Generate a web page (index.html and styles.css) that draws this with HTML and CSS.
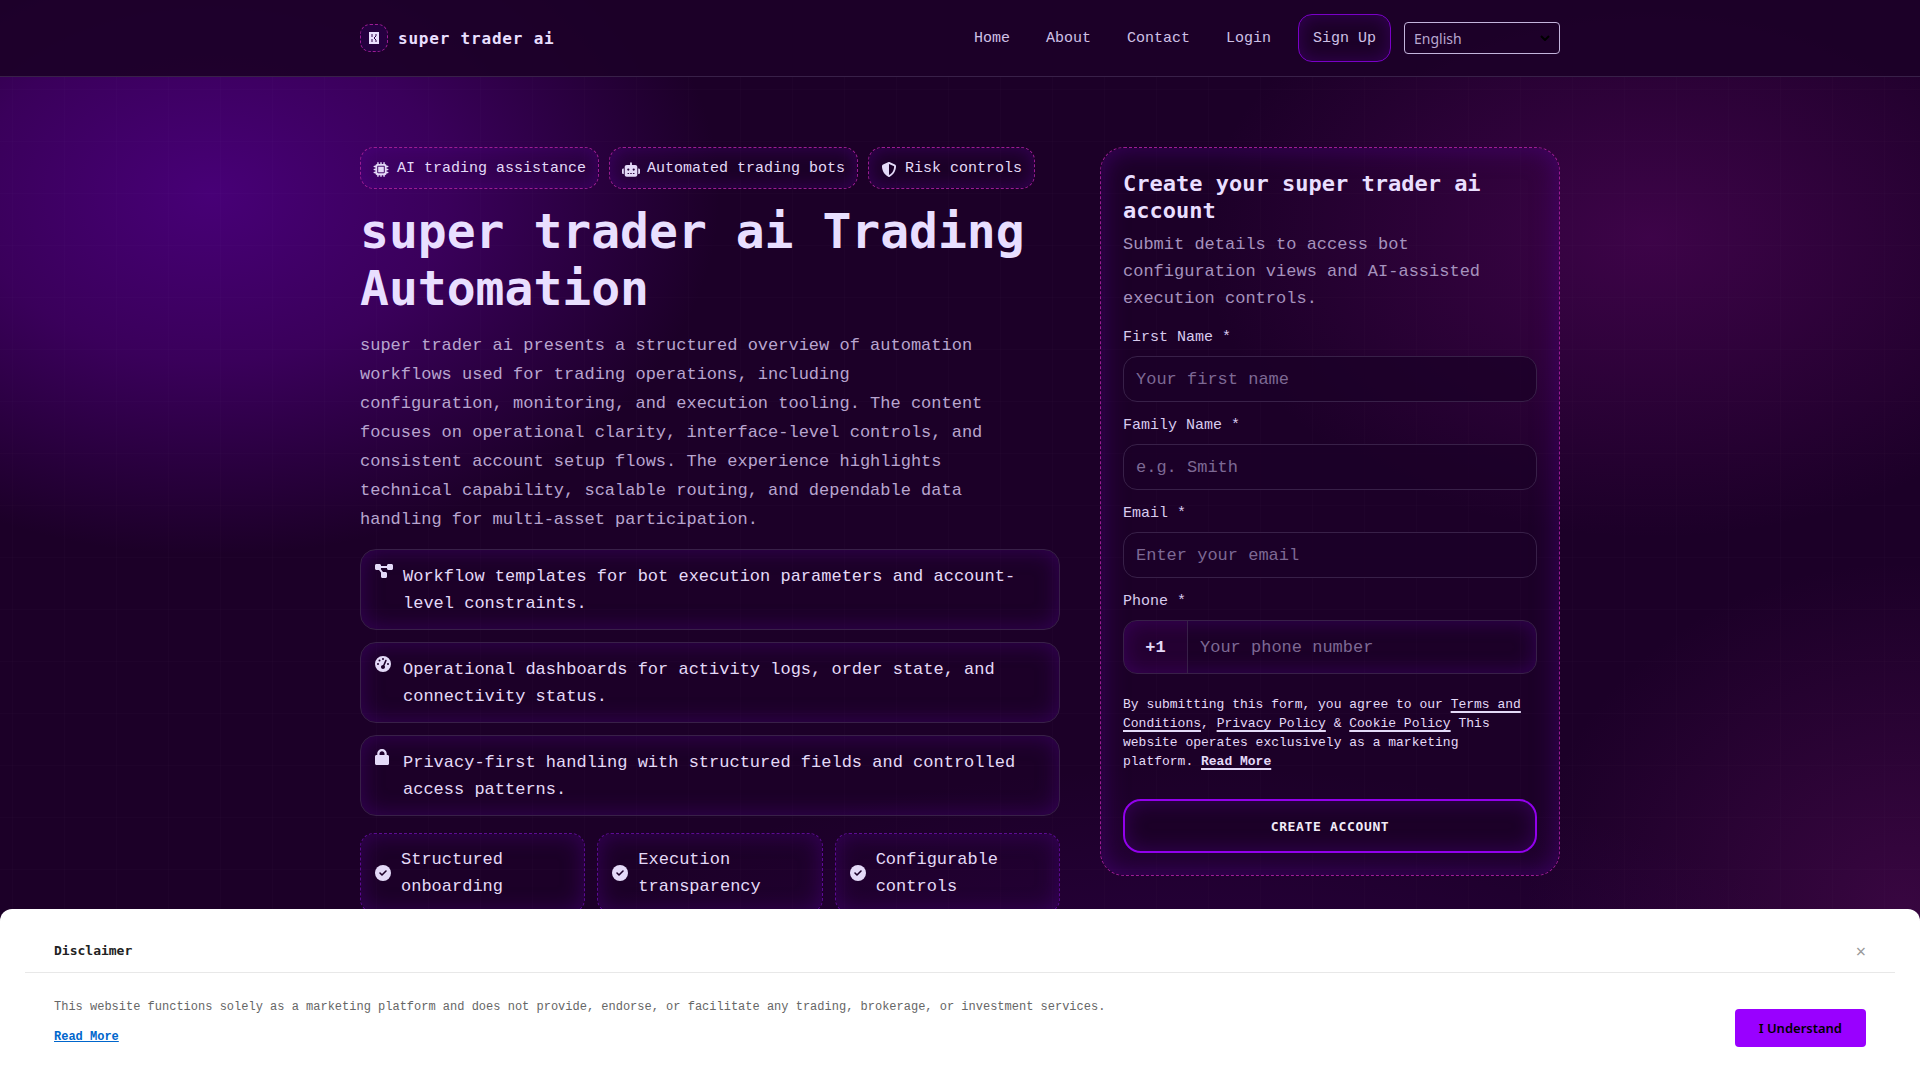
FILE: index.html
```
<!DOCTYPE html>
<html lang="en">
<head>
  <meta charset="UTF-8">
  <meta name="viewport" content="width=device-width, initial-scale=1.0">
  <title>super trader ai</title>
  <link rel="stylesheet" href="styles.css">
</head>
<body>
  <header class="site-header">
    <div class="container header-inner">
      <a class="brand" href="#">
        <span class="brand-mark">
          <svg width="10" height="12" viewBox="0 0 10 12" aria-hidden="true"><path fill="currentColor" d="M0 0h10v12H0z"/><path fill="none" stroke="#2a0045" d="M3 2v3M3 7v3M7 2v2L5 6l2 2v2"/></svg>
        </span>
        <span class="brand-name">super trader ai</span>
      </a>
      <div class="header-right">
        <nav class="nav">
          <a href="#">Home</a>
          <a href="#">About</a>
          <a href="#">Contact</a>
          <a href="#">Login</a>
        </nav>
        <a class="signup" href="#">Sign Up</a>
        <div class="lang">
          <select class="lang-select" aria-label="Language">
            <option>English</option>
          </select>
          <svg class="lang-arrow" width="10" height="6" viewBox="0 0 10 6" aria-hidden="true"><path d="M1 1l4 4 4-4" fill="none" stroke="#000" stroke-width="2"/></svg>
        </div>
      </div>
    </div>
  </header>

  <main class="hero">
    <div class="container hero-grid">
      <section class="hero-copy">
        <div class="chips">
          <span class="chip">
            <svg width="16" height="15" viewBox="0 0 512 512" aria-hidden="true"><path fill="currentColor" fill-rule="evenodd" d="M176 24c0-13-11-24-24-24s-24 11-24 24v40c-35 0-64 29-64 64H24c-13 0-24 11-24 24s11 24 24 24h40v56H24c-13 0-24 11-24 24s11 24 24 24h40v56H24c-13 0-24 11-24 24s11 24 24 24h40c0 35 29 64 64 64v40c0 13 11 24 24 24s24-11 24-24v-40h56v40c0 13 11 24 24 24s24-11 24-24v-40h56v40c0 13 11 24 24 24s24-11 24-24v-40c35 0 64-29 64-64h40c13 0 24-11 24-24s-11-24-24-24h-40v-56h40c13 0 24-11 24-24s-11-24-24-24h-40v-56h40c13 0 24-11 24-24s-11-24-24-24h-40c0-35-29-64-64-64V24c0-13-11-24-24-24s-24 11-24 24v40h-56V24c0-13-11-24-24-24s-24 11-24 24v40h-56V24zM160 128h192c18 0 32 14 32 32v192c0 18-14 32-32 32H160c-18 0-32-14-32-32V160c0-18 14-32 32-32z"/><path fill="currentColor" d="M160 160h192v192H160z"/></svg>
            AI trading assistance
          </span>
          <span class="chip chip-bot">
            <svg width="18" height="15" viewBox="0 0 640 512" aria-hidden="true"><path fill="currentColor" fill-rule="evenodd" d="M320 0c18 0 32 14 32 32v64h120c40 0 72 32 72 72v272c0 40-32 72-72 72H168c-40 0-72-32-72-72V168c0-40 32-72 72-72h120V32c0-18 14-32 32-32zM208 384c-9 0-16 7-16 16s7 16 16 16h32c9 0 16-7 16-16s-7-16-16-16h-32zm96 0c-9 0-16 7-16 16s7 16 16 16h32c9 0 16-7 16-16s-7-16-16-16h-32zm96 0c-9 0-16 7-16 16s7 16 16 16h32c9 0 16-7 16-16s-7-16-16-16h-32zM264 256a40 40 0 1 0-80 0 40 40 0 1 0 80 0zm152 40a40 40 0 1 0 0-80 40 40 0 1 0 0 80zM48 224h16v192H48c-26 0-48-22-48-48v-96c0-26 22-48 48-48zm544 0c26 0 48 22 48 48v96c0 26-22 48-48 48h-16V224h16z"/></svg>
            Automated trading bots
          </span>
          <span class="chip">
            <svg width="16" height="15" viewBox="0 0 512 512" aria-hidden="true"><path fill="currentColor" fill-rule="evenodd" d="M256 0c5 0 9 1 13 3l188 80c22 9 39 31 39 57 0 100-41 281-213 363-17 8-37 8-54 0C57 421 16 240 16 140c0-26 17-48 39-57L243 3c4-2 8-3 13-3zm0 67v378c138-67 175-215 176-303L256 67z"/></svg>
            Risk controls
          </span>
        </div>
        <h1 class="title">super trader ai Trading Automation</h1>
        <p class="lede">super trader ai presents a structured overview of automation workflows used for trading operations, including configuration, monitoring, and execution tooling. The content focuses on operational clarity, interface-level controls, and consistent account setup flows. The experience highlights technical capability, scalable routing, and dependable data handling for multi-asset participation.</p>
        <ul class="features">
          <li class="feature">
            <svg width="18" height="16" viewBox="0 0 576 512" aria-hidden="true"><path fill="currentColor" d="M0 80c0-26 22-48 48-48h96c26 0 48 22 48 48v16h192V80c0-26 22-48 48-48h96c26 0 48 22 48 48v96c0 26-22 48-48 48h-96c-26 0-48-22-48-48v-16H192v16c0 7-2 14-5 21l69 91h80c26 0 48 22 48 48v96c0 26-22 48-48 48h-96c-26 0-48-22-48-48v-96c0-7 2-14 5-21l-69-91H48c-26 0-48-22-48-48V80z"/></svg>
            <span>Workflow templates for bot execution parameters and account-level constraints.</span>
          </li>
          <li class="feature">
            <svg width="16" height="16" viewBox="0 0 512 512" aria-hidden="true"><path fill="currentColor" fill-rule="evenodd" d="M0 256a256 256 0 1 1 512 0 256 256 0 1 1-512 0zM288 96a32 32 0 1 0-64 0 32 32 0 1 0 64 0zM256 416c35 0 64-29 64-64 0-16-6-31-16-42l69-160c5-12 0-26-12-31s-26 0-32 12l-69 160c-37-1-68 27-68 61 0 35 29 64 64 64zM176 144a32 32 0 1 0-64 0 32 32 0 1 0 64 0zM96 288a32 32 0 1 0 0-64 32 32 0 1 0 0 64zm352-32a32 32 0 1 0-64 0 32 32 0 1 0 64 0z"/></svg>
            <span>Operational dashboards for activity logs, order state, and connectivity status.</span>
          </li>
          <li class="feature">
            <svg width="14" height="16" viewBox="0 0 448 512" aria-hidden="true"><path fill="currentColor" d="M400 192h-24v-40C376 68 308 0 224 0S72 68 72 152v40H48c-27 0-48 22-48 48v224c0 27 21 48 48 48h352c27 0 48-21 48-48V240c0-26-21-48-48-48zm-96 0H144v-40c0-44 36-80 80-80s80 36 80 80v40z"/></svg>
            <span>Privacy-first handling with structured fields and controlled access patterns.</span>
          </li>
        </ul>
        <div class="stats">
          <div class="stat">
            <svg width="16" height="16" viewBox="0 0 16 16" aria-hidden="true"><circle cx="8" cy="8" r="8" fill="currentColor"/><path d="M5 8l2 2 4-4" fill="none" stroke="#1c0028" stroke-width="1.6" stroke-linecap="round" stroke-linejoin="round"/></svg>
            <span>Structured onboarding</span>
          </div>
          <div class="stat">
            <svg width="16" height="16" viewBox="0 0 16 16" aria-hidden="true"><circle cx="8" cy="8" r="8" fill="currentColor"/><path d="M5 8l2 2 4-4" fill="none" stroke="#1c0028" stroke-width="1.6" stroke-linecap="round" stroke-linejoin="round"/></svg>
            <span>Execution transparency</span>
          </div>
          <div class="stat">
            <svg width="16" height="16" viewBox="0 0 16 16" aria-hidden="true"><circle cx="8" cy="8" r="8" fill="currentColor"/><path d="M5 8l2 2 4-4" fill="none" stroke="#1c0028" stroke-width="1.6" stroke-linecap="round" stroke-linejoin="round"/></svg>
            <span>Configurable controls</span>
          </div>
        </div>
      </section>

      <aside class="card">
        <h2 class="card-title">Create your super trader ai account</h2>
        <p class="card-text">Submit details to access bot configuration views and AI-assisted execution controls.</p>
        <form class="form">
          <div class="field">
            <label for="firstName">First Name *</label>
            <input class="input" id="firstName" type="text" placeholder="Your first name">
          </div>
          <div class="field">
            <label for="familyName">Family Name *</label>
            <input class="input" id="familyName" type="text" placeholder="e.g. Smith">
          </div>
          <div class="field">
            <label for="email">Email *</label>
            <input class="input" id="email" type="email" placeholder="Enter your email">
          </div>
          <div class="field">
            <label for="phone">Phone *</label>
            <div class="phone">
              <span class="phone-code">+1</span>
              <input class="phone-input" id="phone" type="tel" placeholder="Your phone number">
            </div>
          </div>
          <p class="terms">By submitting this form, you agree to our <a href="#">Terms and Conditions</a>, <a href="#">Privacy Policy</a> &amp; <a href="#">Cookie Policy</a> This website operates exclusively as a marketing platform. <a class="more" href="#">Read More</a></p>
          <button class="submit" type="button">CREATE ACCOUNT</button>
        </form>
      </aside>
    </div>
  </main>

  <div class="disclaimer">
    <div class="disclaimer-head">
      <h3 class="disclaimer-title">Disclaimer</h3>
      <button class="disclaimer-close" type="button" aria-label="Close">×</button>
    </div>
    <div class="disclaimer-body">
      <div class="disclaimer-text">
        <p>This website functions solely as a marketing platform and does not provide, endorse, or facilitate any trading, brokerage, or investment services.</p>
        <a href="#">Read More</a>
      </div>
      <button class="understand" type="button">I Understand</button>
    </div>
  </div>
</body>
</html>
```
FILE: styles.css
```
* {
  box-sizing: border-box;
}
body {
  margin: 0;
  height: 100vh;
  overflow: hidden;
  color: #e4daf8;
  background-color: #1c0028;
  background-image:
    radial-gradient(620px 440px at 11% 18%, rgba(82, 0, 138, 0.8), rgba(74, 0, 118, 0.65) 38%, transparent 82%),
    radial-gradient(600px 400px at 86% 22%, rgba(120, 10, 130, 0.36), transparent 75%),
    radial-gradient(500px 460px at 99% 84%, rgba(120, 20, 120, 0.3), transparent 75%),
    radial-gradient(900px 360px at 62% 96%, rgba(85, 0, 140, 0.24), transparent 75%);
  font: 17px/27px "Liberation Mono", monospace;
}
h1, h2, h3, p, ul {
  margin: 0;
  padding: 0;
}
.container {
  width: 100%;
  max-width: 1248px;
  margin: 0 auto;
  padding: 0 24px;
}

/* header */
.site-header {
  background: rgba(28, 0, 40, 0.92);
  border-bottom: 1px solid #382048;
}
.header-inner {
  display: flex;
  align-items: center;
  justify-content: space-between;
  height: 76px;
}
.brand {
  display: flex;
  align-items: center;
  gap: 10px;
  color: #e9dfff;
  text-decoration: none;
}
.brand-mark {
  display: flex;
  align-items: center;
  justify-content: center;
  width: 28px;
  height: 28px;
  border: 1px dashed #9c1c94;
  border-radius: 10px;
  background: #250040;
}
.brand-name {
  font: 700 16px/27px "DejaVu Sans Mono", monospace;
  letter-spacing: 0.05em;
}
.header-right {
  display: flex;
  align-items: center;
  gap: 13px;
}
.nav {
  display: flex;
  gap: 8px;
}
.nav a, .signup {
  padding: 11px 14px 9px;
  color: #cfc0e6;
  font-size: 15px;
  line-height: 26px;
  text-decoration: none;
}
.signup {
  border: 1px solid #7a00c8;
  border-radius: 14px;
  box-shadow: inset 0 0 18px rgba(85, 0, 150, 0.42);
}
.lang {
  position: relative;
  width: 156px;
}
.lang-select {
  display: block;
  width: 100%;
  height: 32px;
  padding: 0 9px;
  border: 1px solid #c3b4dc;
  border-radius: 4px;
  background: transparent;
  color: #b8a8d0;
  font: 14px "Noto Sans", sans-serif;
  appearance: none;
}
.lang-arrow {
  position: absolute;
  right: 10px;
  top: 13px;
  pointer-events: none;
}

/* hero */
.hero {
  padding: 70px 0;
  background-image:
    linear-gradient(rgba(255, 255, 255, 0.012) 1px, transparent 1px),
    linear-gradient(90deg, rgba(255, 255, 255, 0.012) 1px, transparent 1px);
  background-size: 52px 52px;
  background-position: 12px 12px;
}
.hero-grid {
  display: grid;
  grid-template-columns: 35fr 23fr;
  gap: 40px;
  align-items: start;
}
.chips {
  display: flex;
  flex-wrap: wrap;
  gap: 10px;
}
.chip {
  display: flex;
  align-items: center;
  gap: 8px;
  padding: 9px 12px 7px;
  border: 1px dashed #9c1c94;
  border-radius: 14px;
  font-size: 15px;
  line-height: 24px;
  box-shadow: inset 0 0 18px rgba(85, 0, 150, 0.42);
}
.chip-bot {
  gap: 7px;
}
.title {
  margin-top: 14px;
  color: #e9dfff;
  font: 700 48px/57px "DejaVu Sans Mono", monospace;
}
.lede {
  max-width: 630px;
  margin-top: 14px;
  color: #b8a5cf;
  line-height: 29px;
}
.features {
  display: grid;
  gap: 12px;
  margin-top: 15px;
  list-style: none;
}
.feature {
  display: grid;
  grid-template-columns: 18px 1fr;
  gap: 10px;
  align-items: start;
  padding: 13px 14px 12px;
  border: 1px solid #382048;
  border-radius: 16px;
  box-shadow: inset 0 0 22px rgba(85, 0, 150, 0.42);
}
.stats {
  display: grid;
  grid-template-columns: repeat(3, 1fr);
  gap: 12px;
  margin-top: 17px;
}
.stat {
  display: flex;
  align-items: center;
  gap: 10px;
  padding: 12px 14px;
  border: 1px dashed #5c0a94;
  border-radius: 14px;
  box-shadow: inset 0 0 22px rgba(85, 0, 150, 0.42);
}
.stat svg {
  flex: none;
}

/* sign up card */
.card {
  padding: 22px;
  border: 1px dashed #9c1c94;
  border-radius: 24px;
  box-shadow: inset 0 0 26px rgba(85, 0, 150, 0.5);
}
.card-title {
  color: #e9dfff;
  font: 700 22px/27px "DejaVu Sans Mono", monospace;
}
.card-text {
  margin-top: 7px;
  color: #a592bd;
}
.form {
  margin-top: 14px;
}
.field {
  display: grid;
  gap: 6px;
  margin-bottom: 12px;
}
.field label {
  font-size: 15px;
  line-height: 24px;
  color: #d8cbee;
}
.input {
  width: 100%;
  height: 46px;
  padding: 0 12px;
  border: 1px solid #382048;
  border-radius: 14px;
  background: rgba(28, 0, 40, 0.8);
}
.input, .phone-input {
  color: #e9dfff;
  font: 17px "Liberation Mono", monospace;
}
.input::placeholder, .phone-input::placeholder {
  color: #7d6994;
  opacity: 1;
}
.phone {
  display: flex;
  height: 54px;
  overflow: hidden;
  border: 1px solid #382048;
  border-radius: 14px;
  box-shadow: inset 0 0 20px rgba(85, 0, 150, 0.42);
}
.phone-code {
  display: flex;
  align-items: center;
  justify-content: center;
  width: 64px;
  border-right: 1px solid #382048;
  background: rgba(90, 0, 110, 0.15);
  font-weight: 700;
}
.phone-input {
  flex: 1;
  min-width: 0;
  padding: 0 12px;
  border: 0;
  background: transparent;
}
.terms {
  max-width: 402px;
  margin-top: 21px;
  font-size: 13px;
  line-height: 19px;
}
.terms a {
  color: inherit;
  text-decoration: underline 2px;
  text-decoration-skip-ink: none;
  text-underline-offset: 3px;
}
.terms .more {
  font-weight: 700;
}
.submit {
  width: 100%;
  height: 54px;
  margin-top: 28px;
  border: 2px solid #9200ec;
  border-radius: 18px;
  background: #1c0028;
  box-shadow: inset 0 0 20px rgba(85, 0, 150, 0.42);
  color: #f2ecf8;
  font: 700 13px "DejaVu Sans Mono", monospace;
  letter-spacing: 0.05em;
}

/* disclaimer bar */
.disclaimer {
  position: fixed;
  left: 0;
  right: 0;
  bottom: 0;
  height: 171px;
  padding: 20px 25px;
  border-radius: 12px 12px 0 0;
  background: #fff;
}
.disclaimer-head {
  display: flex;
  align-items: center;
  justify-content: space-between;
  height: 44px;
  padding: 0 29px;
  border-bottom: 1px solid #e8e8e8;
}
.disclaimer-title {
  color: #222;
  font: 700 13px "DejaVu Sans Mono", monospace;
}
.disclaimer-close {
  padding: 0;
  border: 0;
  background: none;
  color: #999;
  font: 18px "Noto Sans", sans-serif;
}
.disclaimer-body {
  display: flex;
  align-items: flex-end;
  justify-content: space-between;
  padding: 24px 29px 0;
}
.disclaimer-text {
  color: #666;
  font-size: 12px;
  line-height: 20px;
}
.disclaimer-text a {
  display: inline-block;
  margin-top: 10px;
  color: #0066cc;
  font-weight: 700;
}
.understand {
  height: 38px;
  padding: 0 24px;
  border: 0;
  border-radius: 4px;
  background: #9900ff;
  color: #000;
  font: 600 13px "Noto Sans", sans-serif;
}
```
